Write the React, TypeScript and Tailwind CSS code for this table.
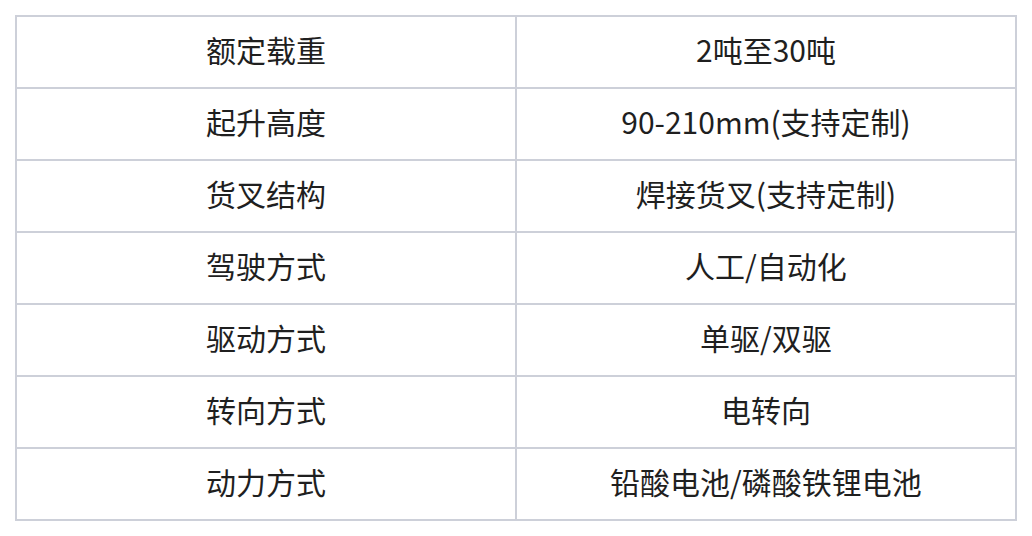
const rows: [string, string][] = [
  ["额定载重", "2吨至30吨"],
  ["起升高度", "90-210mm(支持定制)"],
  ["货叉结构", "焊接货叉(支持定制)"],
  ["驾驶方式", "人工/自动化"],
  ["驱动方式", "单驱/双驱"],
  ["转向方式", "电转向"],
  ["动力方式", "铅酸电池/磷酸铁锂电池"],
]

export default function App() {
  return (
    <div className="h-[536px] w-[1032px] bg-white px-[15px] pt-[15px] font-['Noto_Sans_CJK_SC','Noto_Sans',sans-serif] text-[#1f1f1f]">
      <table className="w-[1002px] table-fixed border-collapse">
        <tbody>
          {rows.map(([label, value]) => (
            <tr key={label} className="h-[72px]">
              <td className="border-2 border-[#cdd0d9] pb-[6px] text-center text-[30px] leading-none">{label}</td>
              <td className="border-2 border-[#cdd0d9] pb-[6px] text-center text-[30px] leading-none">{value}</td>
            </tr>
          ))}
        </tbody>
      </table>
    </div>
  )
}
